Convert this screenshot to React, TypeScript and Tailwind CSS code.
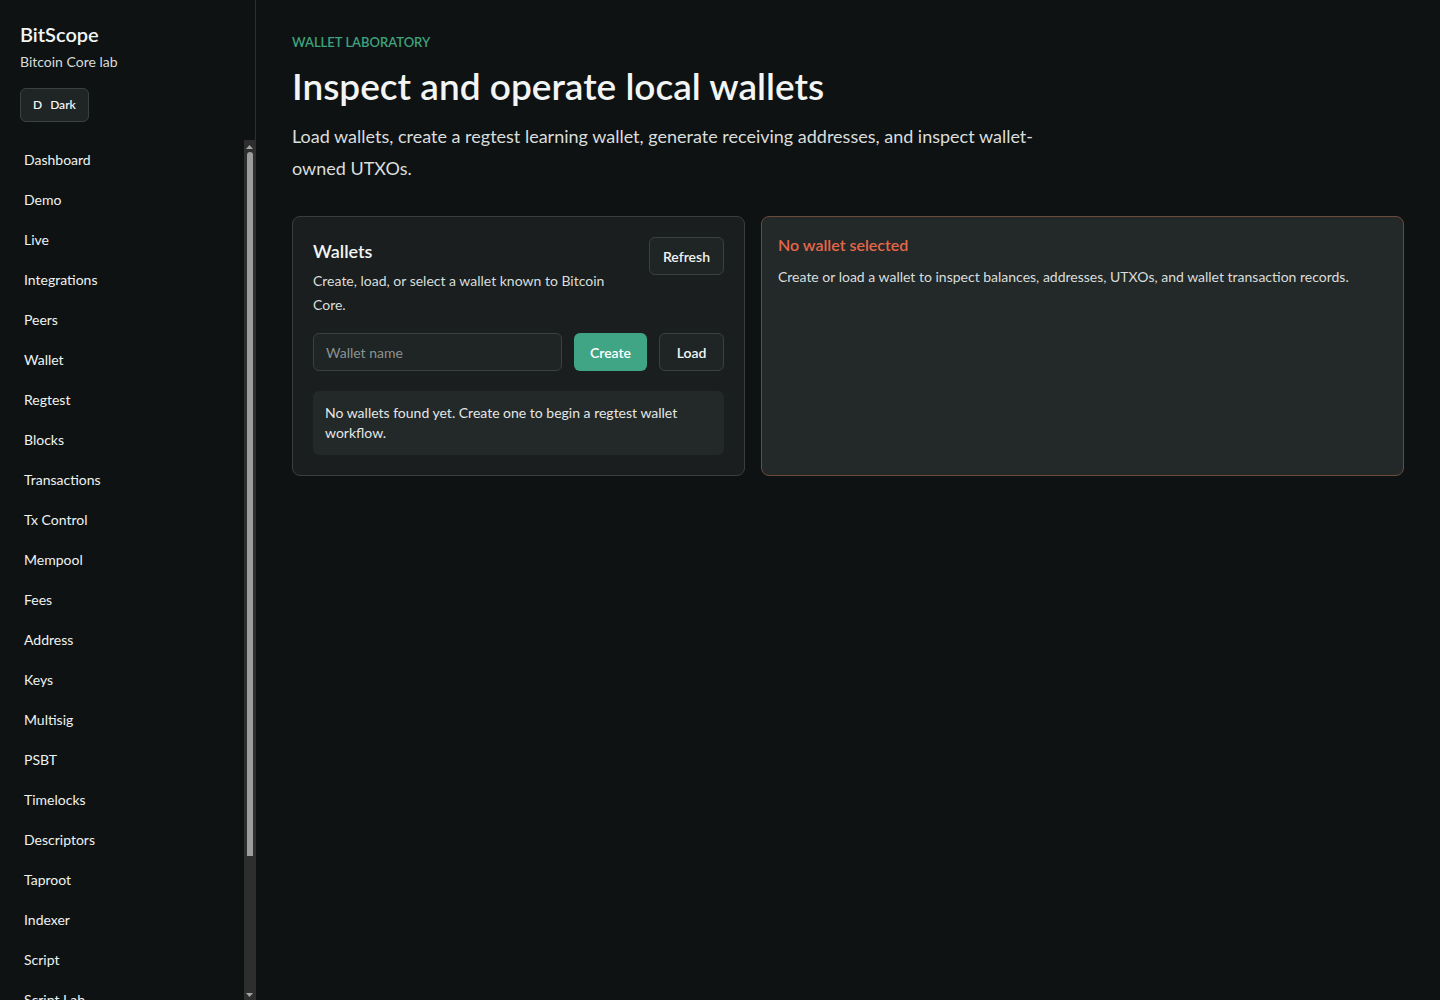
import React, { useState } from 'react';

const navItems = [
  'Dashboard',
  'Demo',
  'Live',
  'Integrations',
  'Peers',
  'Wallet',
  'Regtest',
  'Blocks',
  'Transactions',
  'Tx Control',
  'Mempool',
  'Fees',
  'Address',
  'Keys',
  'Multisig',
  'PSBT',
  'Timelocks',
  'Descriptors',
  'Taproot',
  'Indexer',
  'Script',
  'Script Lab',
  'Network',
];

// Classic scrollbar look for the nav list (drawn, since headless hides real ones)
const NavScrollbar = () => (
  <div className="w-[11px] shrink-0 bg-[#2e2e2e] flex flex-col items-center">
    <svg width="7" height="4" viewBox="0 0 7 4" className="mt-[5px]">
      <path d="M3.5 0 L7 4 L0 4 Z" fill="#a3a3a3" />
    </svg>
    <div className="mt-[3px] w-[6px] h-[704px] rounded-t-[3px] bg-[#9d9d9d]" />
    <div className="flex-1" />
    <svg width="7" height="4" viewBox="0 0 7 4" className="mb-[3px]">
      <path d="M0 0 L7 0 L3.5 4 Z" fill="#a3a3a3" />
    </svg>
  </div>
);

const Sidebar = () => (
  <aside className="w-[256px] shrink-0 h-screen flex flex-col border-r border-[#2a2f2f] bg-[#0f1212]">
    {/* Brand */}
    <div className="px-5 pt-5 pb-[18px]">
      <h1 className="text-[20px] leading-7 font-semibold text-[#f2f5f4]">BitScope</h1>
      <p className="mt-[4px] text-[14px] leading-5 text-[#d7dcdb]">Bitcoin Core lab</p>
      <button className="mt-4 h-[34px] px-3 rounded-md border border-[#3b4141] bg-[#1f2424] text-[12px] font-semibold text-[#f2f5f4] flex items-center gap-2">
        <span>D</span>
        <span>Dark</span>
      </button>
    </div>

    {/* Nav */}
    <div className="flex-1 min-h-0 flex">
      <nav className="flex-1 overflow-hidden pl-5">
        {navItems.map((item) => (
          <a
            key={item}
            href="#"
            className="block px-1 py-[10px] text-[14px] leading-5 text-[#eef2f1] hover:text-white"
          >
            {item}
          </a>
        ))}
      </nav>
      <NavScrollbar />
    </div>
  </aside>
);

export default function App() {
  const [walletName, setWalletName] = useState('');

  return (
    <div className="flex h-screen overflow-hidden bg-[#0f1212] font-['Lato','Open_Sans',sans-serif]">
      <Sidebar />

      <main className="flex-1 overflow-y-auto px-9 pt-8">
        <p className="text-[13px] leading-5 font-semibold text-[#3ea37e]">WALLET LABORATORY</p>
        <h2 className="mt-[14px] text-[37px] leading-10 font-semibold text-[#f2f5f4]">
          Inspect and operate local wallets
        </h2>
        <p className="mt-[14px] max-w-[760px] text-[18px] leading-8 text-[#d9dedd]">
          Load wallets, create a regtest learning wallet, generate receiving addresses, and inspect wallet-owned UTXOs.
        </p>

        <div className="mt-8 grid grid-cols-[453px_1fr] gap-4">
          {/* Wallets card */}
          <section className="rounded-lg border border-[#393f3f] bg-[#1a1e1e] p-5">
            <div className="flex items-start justify-between gap-4">
              <div className="max-w-[300px]">
                <h3 className="text-[18px] leading-7 font-semibold text-[#f2f5f4]">Wallets</h3>
                <p className="mt-[4px] text-[14px] leading-6 text-[#d9dedd]">
                  Create, load, or select a wallet known to Bitcoin Core.
                </p>
              </div>
              <button className="h-[38px] px-[13px] rounded-md border border-[#3b4141] bg-[#1f2424] text-[14px] font-semibold text-[#f2f5f4]">
                Refresh
              </button>
            </div>

            <div className="mt-4 flex gap-3">
              <input
                value={walletName}
                onChange={(e) => setWalletName(e.target.value)}
                placeholder="Wallet name"
                className="h-[38px] flex-1 min-w-0 rounded-md border border-[#3b4141] bg-[#1f2424] px-3 text-[14px] text-[#f2f5f4] placeholder:text-[#8b9391] outline-none"
              />
              <button className="h-[38px] w-[73px] rounded-md bg-[#3fa585] text-[14px] font-semibold text-white">
                Create
              </button>
              <button className="h-[38px] w-[65px] rounded-md border border-[#3b4141] bg-[#1f2424] text-[14px] font-semibold text-[#f2f5f4]">
                Load
              </button>
            </div>

            <div className="mt-5 rounded-md bg-[#232828] px-3 py-3 text-[14px] leading-5 text-[#e3e7e6]">
              No wallets found yet. Create one to begin a regtest wallet workflow.
            </div>
          </section>

          {/* Empty state card */}
          <section className="rounded-lg border border-[#6a4b3e] bg-[#232828] p-4">
            <h3 className="text-[16px] leading-6 font-semibold text-[#e4674a]">No wallet selected</h3>
            <p className="mt-[10px] text-[14px] leading-5 text-[#d9dedd]">
              Create or load a wallet to inspect balances, addresses, UTXOs, and wallet transaction records.
            </p>
          </section>
        </div>
      </main>
    </div>
  );
}
